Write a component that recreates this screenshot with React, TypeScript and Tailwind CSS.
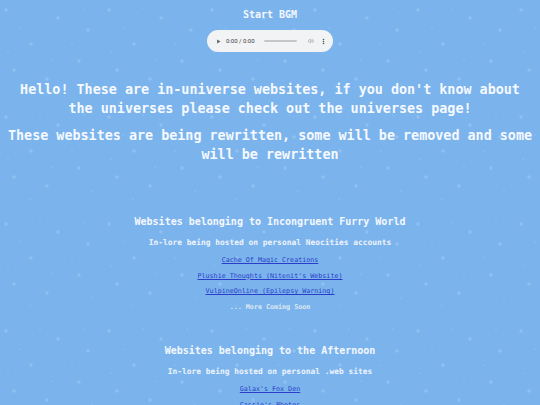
import { Play, Volume2, MoreVertical } from "lucide-react";

const sparkles = [
  [6, 10], [31, 44], [58, 18], [79, 61], [14, 70], [47, 79], [88, 30],
];
const dots = [
  [20, 28], [40, 8], [72, 44], [8, 52], [52, 60], [92, 84], [30, 92], [84, 8],
];

function Sky() {
  return (
    <svg className="absolute inset-0 w-full h-full pointer-events-none" aria-hidden>
      <defs>
        <pattern id="sky" width="103" height="107" patternUnits="userSpaceOnUse">
          {sparkles.map(([x, y], i) => (
            <g key={i} fill="#ffffff" opacity="0.22">
              <rect x={x - 0.5} y={y - 2} width="1" height="4" />
              <rect x={x - 2} y={y - 0.5} width="4" height="1" />
            </g>
          ))}
          {dots.map(([x, y], i) => (
            <circle key={i} cx={x} cy={y} r="0.6" fill="#ffffff" opacity="0.28" />
          ))}
        </pattern>
      </defs>
      <rect width="100%" height="100%" fill="url(#sky)" />
    </svg>
  );
}

function AudioPill() {
  return (
    <div className="mx-auto mt-[9px] flex h-[22px] w-[126px] items-center rounded-full bg-[#f1f3f4] pl-[9px] pr-[6px] text-[#3c4043]">
      <Play size={5} className="fill-[#6b6f73] text-[#6b6f73]" strokeWidth={0} />
      <span className="ml-[5px] text-[6px] leading-none font-['Roboto',sans-serif]">0:00 / 0:00</span>
      <div className="ml-[9px] h-[1.5px] w-[33px] rounded bg-[#c4c7c9]" />
      <Volume2 size={6} className="ml-auto text-[#9aa0a6]" strokeWidth={2.5} />
      <MoreVertical size={7} className="ml-[6px] text-[#3c4043]" strokeWidth={3.5} />
    </div>
  );
}

function Section({ title, sub, links, soon }: any) {
  return (
    <section className="text-center">
      <h3 className="text-[10px] leading-[12px] font-bold text-[#f4f7ff]">{title}</h3>
      <p className="mt-[10px] text-[7.9px] leading-[10px] font-bold text-[#eef3fc]">{sub}</p>
      <div className="mt-[5px]">
        {links.map((l: string) => (
          <p key={l} className="text-[6.7px] leading-[15.5px]">
            <a href="#" className="text-[#2a3dc9] underline">{l}</a>
          </p>
        ))}
        {soon ? (
          <p className="text-[6.7px] leading-[15.5px] font-bold text-[#dfe8f3]">... More Coming Soon</p>
        ) : null}
      </div>
    </section>
  );
}

export default function App() {
  return (
    <div className="relative min-h-screen overflow-hidden bg-[#7bb4ec] font-['DejaVu_Sans_Mono',monospace] text-white">
      <Sky />
      <div className="relative">
        <p className="pt-[9px] text-center text-[10px] leading-[12px] font-bold text-[#f4f7ff]">Start BGM</p>
        <AudioPill />
        <h1 className="mt-[29px] px-[4px] text-center text-[13.4px] leading-[18.5px] font-bold text-[#f6f9ff]">
          Hello! These are in-universe websites, if you don't know about the universes please check out the universes page!
        </h1>
        <h2 className="mt-[9px] text-center text-[13.4px] leading-[18.5px] font-bold text-[#f6f9ff]">
          These websites are being rewritten, some will be removed and some will be rewritten
        </h2>
        <div className="mt-[52px]">
          <Section
            title="Websites belonging to Incongruent Furry World"
            sub="In-lore being hosted on personal Neocities accounts"
            links={["Cache Of Magic Creations", "Plushie Thoughts (Nitenit's Website)", "VulpineOnline (Epilepsy Warning)"]}
            soon
          />
        </div>
        <div className="mt-[30px]">
          <Section
            title="Websites belonging to the Afternoon"
            sub="In-lore being hosted on personal .web sites"
            links={["Galax's Fox Den", "Cassie's Photos"]}
          />
        </div>
      </div>
    </div>
  );
}
